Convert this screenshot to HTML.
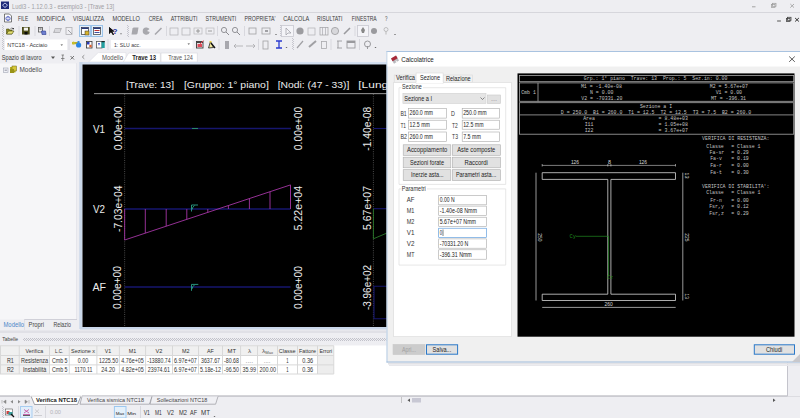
<!DOCTYPE html>
<html><head><meta charset="utf-8"><title>Ludi3</title>
<style>html,body{margin:0;padding:0;background:#eeeef2}body{width:800px;height:418px;overflow:hidden;font-family:"Liberation Sans",sans-serif}svg{display:block}</style>
</head><body>
<svg width="800" height="418" viewBox="0 0 800 418" font-family="Liberation Sans">
<rect x="0" y="0" width="800" height="418" fill="#eeeef2"/>
<rect x="1" y="1.5" width="8" height="7.5" fill="#1f2a78"/>
<path d="M2.5 5.2 L5 3 L7.5 5.2 L5 7.5 Z" fill="none" stroke="#c8d0f0" stroke-width="0.9"/>
<text x="12" y="8.5" font-size="6.4" fill="#a0a0a4" font-family="Liberation Sans" textLength="102.00" lengthAdjust="spacingAndGlyphs" xml:space="preserve">Ludi3 - 1.12.0.3 - esempio3 - [Trave 13]</text>
<line x1="752" y1="6.8" x2="755.5" y2="6.8" stroke="#9a9a9a" stroke-width="0.9"/>
<rect x="771.5" y="4.5" width="3.5" height="3" fill="#eeeef2" stroke="#9a9a9a" stroke-width="0.7"/>
<rect x="772.5" y="3.3" width="3.5" height="3" fill="none" stroke="#9a9a9a" stroke-width="0.7"/>
<path d="M790.3 4 L794 7.6 M794 4 L790.3 7.6" fill="none" stroke="#9a9a9a" stroke-width="0.8"/>
<line x1="0" y1="12.5" x2="800" y2="12.5" stroke="#d6d6dc" stroke-width="1"/>
<path d="M4.5 14 L9.5 14 L11.5 16 L11.5 22 L4.5 22Z" fill="#fff" stroke="#444" stroke-width="0.7"/>
<ellipse cx="8" cy="18.5" rx="2.6" ry="1.6" fill="none" stroke="#3a4ab8" stroke-width="0.6"/>
<ellipse cx="8" cy="18.5" rx="1.2" ry="2.4" fill="none" stroke="#3a4ab8" stroke-width="0.6"/>
<text x="18" y="20.8" font-size="6.5" fill="#3c3c3c" font-family="Liberation Sans" textLength="10.25" lengthAdjust="spacingAndGlyphs" xml:space="preserve">FILE</text>
<text x="36.75" y="20.8" font-size="6.5" fill="#3c3c3c" font-family="Liberation Sans" textLength="28.25" lengthAdjust="spacingAndGlyphs" xml:space="preserve">MODIFICA</text>
<text x="73" y="20.8" font-size="6.5" fill="#3c3c3c" font-family="Liberation Sans" textLength="31.25" lengthAdjust="spacingAndGlyphs" xml:space="preserve">VISUALIZZA</text>
<text x="112.5" y="20.8" font-size="6.5" fill="#3c3c3c" font-family="Liberation Sans" textLength="27.50" lengthAdjust="spacingAndGlyphs" xml:space="preserve">MODELLO</text>
<text x="148.75" y="20.8" font-size="6.5" fill="#3c3c3c" font-family="Liberation Sans" textLength="13.75" lengthAdjust="spacingAndGlyphs" xml:space="preserve">CREA</text>
<text x="170.75" y="20.8" font-size="6.5" fill="#3c3c3c" font-family="Liberation Sans" textLength="26.75" lengthAdjust="spacingAndGlyphs" xml:space="preserve">ATTRIBUTI</text>
<text x="205.5" y="20.8" font-size="6.5" fill="#3c3c3c" font-family="Liberation Sans" textLength="30.75" lengthAdjust="spacingAndGlyphs" xml:space="preserve">STRUMENTI</text>
<text x="244.5" y="20.8" font-size="6.5" fill="#3c3c3c" font-family="Liberation Sans" textLength="31.00" lengthAdjust="spacingAndGlyphs" xml:space="preserve">PROPRIETA'</text>
<text x="283.25" y="20.8" font-size="6.5" fill="#3c3c3c" font-family="Liberation Sans" textLength="26.00" lengthAdjust="spacingAndGlyphs" xml:space="preserve">CALCOLA</text>
<text x="317" y="20.8" font-size="6.5" fill="#3c3c3c" font-family="Liberation Sans" textLength="25.50" lengthAdjust="spacingAndGlyphs" xml:space="preserve">RISULTATI</text>
<text x="351.75" y="20.8" font-size="6.5" fill="#3c3c3c" font-family="Liberation Sans" textLength="25.00" lengthAdjust="spacingAndGlyphs" xml:space="preserve">FINESTRA</text>
<text x="385" y="20.8" font-size="6.5" fill="#3c3c3c" font-family="Liberation Sans" textLength="2.50" lengthAdjust="spacingAndGlyphs" xml:space="preserve">?</text>
<line x1="777.1" y1="21" x2="780.9" y2="21" stroke="#555" stroke-width="1"/>
<rect x="786.5" y="18.5" width="3.5" height="3" fill="#eeeef2" stroke="#444" stroke-width="0.8"/>
<rect x="787.5" y="17.3" width="3.5" height="3" fill="none" stroke="#444" stroke-width="0.8"/>
<path d="M795.1 18 L798.9 21.5 M798.9 18 L795.1 21.5" fill="none" stroke="#333" stroke-width="1"/>
<pattern id="g1" x="2" y="25" width="2" height="2" patternUnits="userSpaceOnUse"><rect x="0" y="0" width="1" height="1" fill="#c6c6ce"/><rect x="1" y="1" width="1" height="1" fill="#c6c6ce"/></pattern>
<rect x="2" y="25" width="2" height="12" fill="url(#g1)"/>
<path d="M6.5 29 L9 29 L9.5 30 L12 30 L12 34 L6.5 34Z" fill="#8a8a20" stroke="#4a4a10" stroke-width="0.6"/>
<path d="M6.5 34 L8.5 31 L14 31 L12 34Z" fill="#e4e070" stroke="#4a4a10" stroke-width="0.6"/>
<rect x="12.5" y="28" width="1.3" height="1.3" fill="#111"/>
<path d="M10.5 28.5 Q12 27.5 13 28.5" fill="none" stroke="#333" stroke-width="0.5"/>
<line x1="19.0" y1="26" x2="19.0" y2="36" stroke="#d8d8de" stroke-width="1"/>
<rect x="22" y="27" width="7.7" height="7.5" fill="#4a4a16"/>
<rect x="23.8" y="27.6" width="4.2" height="3" fill="#f4f4f0"/>
<rect x="24.5" y="32" width="3" height="2.5" fill="#0a0a0a"/>
<line x1="35.0" y1="26" x2="35.0" y2="36" stroke="#d8d8de" stroke-width="1"/>
<rect x="38.5" y="27.5" width="4" height="4.5" fill="#f0f0f0" stroke="#555" stroke-width="0.8"/>
<rect x="39.5" y="28.5" width="2" height="1" fill="#555"/>
<path d="M41.5 31 L45.5 31 L46 34.5 L42 34.5Z" fill="#7080d0" stroke="#2a3a90" stroke-width="0.6"/>
<line x1="49.5" y1="26" x2="49.5" y2="36" stroke="#d8d8de" stroke-width="1"/>
<path d="M53 33 L55 28 L62 28 L60 33Z" fill="#b8b8bc"/>
<rect x="55" y="29" width="5" height="3" fill="#d8d8dc"/>
<rect x="66" y="27.5" width="6" height="7" fill="none" stroke="#b0b0b4" stroke-width="0.8"/>
<path d="M68 30 L72 34" fill="none" stroke="#a0a0a4" stroke-width="1"/>
<rect x="79.5" y="25.5" width="11" height="11" fill="#e6f0fa" stroke="#9cc4ea" stroke-width="1"/>
<rect x="91.5" y="25.5" width="11" height="11" fill="#e6f0fa" stroke="#9cc4ea" stroke-width="1"/>
<rect x="81.5" y="27.5" width="7" height="7" fill="#fff" stroke="#333" stroke-width="0.7"/>
<rect x="81.5" y="27.5" width="7" height="1.5" fill="#2a3a7a"/>
<rect x="85" y="31" width="4" height="4" fill="#d9b42a" stroke="#333" stroke-width="0.5"/>
<rect x="93.5" y="27.5" width="7" height="7" fill="#fff" stroke="#333" stroke-width="0.7"/>
<rect x="93.5" y="27.5" width="7" height="1.5" fill="#2a3a7a"/>
<rect x="94.5" y="30" width="5" height="1" fill="#c03030"/>
<rect x="94.5" y="32" width="5" height="1" fill="#4050a0"/>
<path d="M109 27 L109 34 L111 32 L113 35 L114 34.5 L112 31.5 L114.5 31.5Z" fill="#111"/>
<text x="112.5" y="33.8" font-size="8" fill="#1a2a9a" font-family="Liberation Sans" font-weight="bold" textLength="5.00" lengthAdjust="spacingAndGlyphs" xml:space="preserve">?</text>
<path d="M120 33.5 L122 33.5 L121 34.5Z" fill="#444"/>
<pattern id="g2" x="127" y="25" width="2" height="2" patternUnits="userSpaceOnUse"><rect x="0" y="0" width="1" height="1" fill="#c6c6ce"/><rect x="1" y="1" width="1" height="1" fill="#c6c6ce"/></pattern>
<rect x="127" y="25" width="2" height="12" fill="url(#g2)"/>
<path d="M131.5 34.5 L132.5 28.5 Q133 27.5 134 27.5 L138.5 27.5 L137.5 33.5 Q137 34.5 136 34.5Z" fill="#a8a8ad"/>
<path d="M146 27.5 A3.6 3.6 0 1 0 149.8 32 L147 31 L149.5 29 A3.6 3.6 0 0 0 146 27.5Z" fill="#a8a8ad"/>
<line x1="155" y1="34.5" x2="161.5" y2="28" stroke="#a8a8ad" stroke-width="1.6"/>
<path d="M109 27 L109 34 L111 32 L113 35 L114 34.5 L112 31.5 L114.5 31.5Z" fill="#111"/>
<line x1="166.5" y1="26" x2="166.5" y2="36" stroke="#d8d8de" stroke-width="1"/>
<rect x="170" y="28" width="8" height="7" fill="none" stroke="#b0b0b4" stroke-width="0.7"/>
<rect x="182" y="28" width="8" height="7" fill="none" stroke="#b0b0b4" stroke-width="0.7"/>
<rect x="194" y="28" width="8" height="6" fill="none" stroke="#b8b8bc" stroke-width="0.7"/>
<path d="M196 31 L200 31 M198 29 L198 33" fill="none" stroke="#888" stroke-width="0.8"/>
<rect x="206" y="28" width="8" height="6" fill="none" stroke="#b8b8bc" stroke-width="0.7"/>
<path d="M208 31 L212 31" fill="none" stroke="#888" stroke-width="0.8"/>
<line x1="217.5" y1="26" x2="217.5" y2="36" stroke="#d8d8de" stroke-width="1"/>
<circle cx="224" cy="30" r="2.6" fill="none" stroke="#8a8a8e" stroke-width="0.9"/>
<line x1="226" y1="32" x2="229" y2="35" stroke="#8a8a8e" stroke-width="1"/>
<circle cx="235" cy="30" r="2.6" fill="none" stroke="#8a8a8e" stroke-width="0.9"/>
<line x1="237" y1="32" x2="240" y2="35" stroke="#8a8a8e" stroke-width="1"/>
<line x1="244.5" y1="26" x2="244.5" y2="36" stroke="#d8d8de" stroke-width="1"/>
<rect x="249" y="28" width="7" height="6" fill="none" stroke="#a0a0a4" stroke-width="0.8"/>
<rect x="262" y="28" width="8" height="6" fill="none" stroke="#a0a0a4" stroke-width="0.8"/>
<rect x="265" y="30" width="3" height="2" fill="#a0a0a4"/>
<path d="M275 34 L277 34 L276 35Z" fill="#444"/>
<pattern id="g3" x="280" y="25" width="2" height="2" patternUnits="userSpaceOnUse"><rect x="0" y="0" width="1" height="1" fill="#c6c6ce"/><rect x="1" y="1" width="1" height="1" fill="#c6c6ce"/></pattern>
<rect x="280" y="25" width="2" height="12" fill="url(#g3)"/>
<rect x="281.5" y="25.5" width="12" height="11" fill="#f4f4f8" stroke="#c8c8d0" stroke-width="0.8"/>
<path d="M286 28 L286 35 L288 33 L291 33Z" fill="none" stroke="#9a9aa0" stroke-width="0.7"/>
<circle cx="300" cy="31" r="3.6" fill="#9c9ca0"/>
<rect x="308" y="28" width="7" height="7" fill="none" stroke="#b0b0b4" stroke-width="0.7"/>
<rect x="320" y="27.5" width="8" height="7.5" fill="none" stroke="#a0a0a4" stroke-width="0.7"/>
<line x1="322.5" y1="27.5" x2="322.5" y2="35" stroke="#a0a0a4" stroke-width="0.6"/>
<line x1="325.5" y1="27.5" x2="325.5" y2="35" stroke="#a0a0a4" stroke-width="0.6"/>
<circle cx="335" cy="31" r="3.6" fill="#d8d8dc" stroke="#909094" stroke-width="0.7"/>
<line x1="344" y1="34" x2="350" y2="28" stroke="#9a9a9e" stroke-width="1.6"/>
<line x1="355.0" y1="26" x2="355.0" y2="36" stroke="#d8d8de" stroke-width="1"/>
<rect x="357.5" y="25.5" width="11" height="11" fill="#f4f4f8" stroke="#c8c8d0" stroke-width="0.8"/>
<path d="M363 27 L365 30 L364 33 L362 33 L361 30Z" fill="#888"/>
<circle cx="374" cy="31" r="3" fill="#9a9a9e"/>
<circle cx="386" cy="29.5" r="2" fill="none" stroke="#aaa" stroke-width="0.7"/>
<line x1="386" y1="31.5" x2="386" y2="34.5" stroke="#aaa" stroke-width="0.8"/>
<path d="M394 34 L396 34 L395 35Z" fill="#444"/>
<pattern id="g4" x="2" y="38" width="2" height="2" patternUnits="userSpaceOnUse"><rect x="0" y="0" width="1" height="1" fill="#c6c6ce"/><rect x="1" y="1" width="1" height="1" fill="#c6c6ce"/></pattern>
<rect x="2" y="38" width="2" height="12" fill="url(#g4)"/>
<rect x="5" y="39.5" width="62" height="10.5" fill="#ffffff"/>
<text x="7.2" y="47.1" font-size="5.6" fill="#3a3a3a" font-family="Liberation Sans" textLength="40.10" lengthAdjust="spacingAndGlyphs" xml:space="preserve">NTC18 - Acciaio</text>
<path d="M60.5 44.5 L63 44.5 L61.75 45.8Z" fill="#444"/>
<line x1="69.0" y1="39" x2="69.0" y2="50" stroke="#d8d8de" stroke-width="1"/>
<rect x="72" y="42" width="6" height="2.2" fill="#b8b028"/>
<circle cx="73.5" cy="43" r="1.5" fill="#c8c030"/>
<circle cx="78.6" cy="45" r="2.6" fill="#2a86e8"/>
<rect x="77.5" y="41" width="2" height="2.5" fill="#3a90e0"/>
<rect x="86.5" y="41.5" width="5.5" height="6.5" fill="#fff" stroke="#333" stroke-width="0.8"/>
<rect x="87" y="42" width="2.5" height="2.5" fill="#2a3ab8"/>
<rect x="89.3" y="44.8" width="2.3" height="2.5" fill="#e06030"/>
<rect x="96.5" y="41.5" width="5.5" height="6.5" fill="#fff" stroke="#555" stroke-width="0.8"/>
<path d="M98 43 L100 43 L99 46Z" fill="#3a50d0"/>
<rect x="101.5" y="41" width="3.2" height="7" fill="#22a0a0"/>
<rect x="101.5" y="41" width="3.2" height="1.2" fill="#222"/>
<line x1="108.0" y1="39" x2="108.0" y2="50" stroke="#d8d8de" stroke-width="1"/>
<rect x="111" y="40" width="81.5" height="8.5" fill="#ffffff"/>
<text x="114" y="46.8" font-size="5.6" fill="#3a3a3a" font-family="Liberation Sans" textLength="26.60" lengthAdjust="spacingAndGlyphs" xml:space="preserve">1: SLU acc.</text>
<path d="M187.5 43.5 L190 43.5 L188.75 44.8Z" fill="#444"/>
<rect x="196.5" y="41.5" width="6.5" height="6.5" fill="#f4f4f4" stroke="#3a3a3a" stroke-width="0.9"/>
<rect x="196.5" y="41.5" width="6.5" height="1.6" fill="#444"/>
<rect x="197.5" y="44" width="4.5" height="3" fill="#e04858"/>
<line x1="200" y1="44" x2="203.5" y2="40.5" stroke="#f04050" stroke-width="0.9"/>
<path d="M208.5 48 L210.5 41.5 L213.5 47.5Z" fill="#f0e8a0" stroke="#222" stroke-width="0.8"/>
<line x1="211" y1="43" x2="215" y2="48" stroke="#111" stroke-width="1.3"/>
<rect x="209.5" y="41" width="2" height="1.5" fill="#e8d040"/>
<line x1="219.0" y1="39" x2="219.0" y2="50" stroke="#d8d8de" stroke-width="1"/>
<rect x="225" y="41" width="4" height="8" fill="#a8a8ae"/>
<path d="M234 46 L243 46 M236 44 L234 46 L236 48" fill="none" stroke="#a8a8ac" stroke-width="0.8"/>
<path d="M246 46 L255 46 M253 44 L255 46 L253 48" fill="none" stroke="#a8a8ac" stroke-width="0.8"/>
<line x1="258.5" y1="39" x2="258.5" y2="50" stroke="#d8d8de" stroke-width="1"/>
<rect x="263" y="41" width="5" height="8" fill="none" stroke="#a0a0a4" stroke-width="0.8"/>
<path d="M276 41 L282 41 M279 41 L279 48 M276 48 L282 48" fill="none" stroke="#2a3ad0" stroke-width="1.3"/>
<path d="M285.5 47 L287.5 47 L286.5 48Z" fill="#444"/>
<pattern id="g5" x="292" y="38" width="2" height="2" patternUnits="userSpaceOnUse"><rect x="0" y="0" width="1" height="1" fill="#c6c6ce"/><rect x="1" y="1" width="1" height="1" fill="#c6c6ce"/></pattern>
<rect x="292" y="38" width="2" height="12" fill="url(#g5)"/>
<line x1="297" y1="48" x2="303" y2="41" stroke="#a0a0a4" stroke-width="1.2"/>
<line x1="309" y1="47" x2="316" y2="41" stroke="#a0a0a4" stroke-width="2"/>
<rect x="321.5" y="41.5" width="5" height="7" fill="none" stroke="#a8a8ac" stroke-width="0.8"/>
<line x1="331.0" y1="39" x2="331.0" y2="50" stroke="#d8d8de" stroke-width="1"/>
<path d="M337 41 L342 41 M338 41 L338 48 M337 48 L342 48" fill="none" stroke="#9a9a9e" stroke-width="0.9"/>
<rect x="347" y="41" width="8" height="7" fill="none" stroke="#9a9a9e" stroke-width="0.9"/>
<rect x="347" y="41" width="8" height="2" fill="#9a9a9e"/>
<line x1="359.5" y1="39" x2="359.5" y2="50" stroke="#d8d8de" stroke-width="1"/>
<circle cx="367.5" cy="44" r="3" fill="none" stroke="#9a9a9e" stroke-width="1"/>
<line x1="367.5" y1="46" x2="367.5" y2="49" stroke="#9a9a9e" stroke-width="1"/>
<path d="M374.5 47 L376.5 47 L375.5 48Z" fill="#444"/>
<text x="1.8" y="59.8" font-size="6.3" fill="#3a3a3a" font-family="Liberation Sans" textLength="39.80" lengthAdjust="spacingAndGlyphs" xml:space="preserve">Spazio di lavoro</text>
<path d="M51 56.5 L55 56.5 L53 59Z" fill="#555"/>
<path d="M61.5 55 L64 55 M62.75 55 L62.75 58.5 M61 58.5 L64.5 58.5 M62.75 58.5 L62.75 61" fill="none" stroke="#666" stroke-width="0.7"/>
<path d="M70.5 56 L74 59.5 M74 56 L70.5 59.5" fill="none" stroke="#555" stroke-width="0.8"/>
<rect x="0" y="63.5" width="76.5" height="256" fill="#f6f6f8"/>
<line x1="76.5" y1="63" x2="76.5" y2="330" stroke="#e6e6ec" stroke-width="1"/>
<rect x="3.5" y="68" width="4.5" height="4.3" fill="#eef0f6" stroke="#a0a6b4" stroke-width="0.6"/>
<line x1="4.6" y1="70.2" x2="6.9" y2="70.2" stroke="#556" stroke-width="0.6"/>
<rect x="10" y="67" width="5.5" height="5.5" fill="#b8b020"/>
<rect x="12" y="66" width="4.5" height="5" fill="#d6c83a" stroke="#6a6010" stroke-width="0.5"/>
<rect x="10" y="69" width="4" height="4" fill="#9a9418"/>
<text x="19.5" y="72" font-size="6.4" fill="#4a4a4a" font-family="Liberation Sans" textLength="22.50" lengthAdjust="spacingAndGlyphs" xml:space="preserve">Modello</text>
<rect x="24" y="319.5" width="53" height="10.5" fill="#eeeef2"/>
<line x1="24" y1="319.5" x2="77" y2="319.5" stroke="#d0d0d8" stroke-width="1"/>
<line x1="24.5" y1="319.5" x2="24.5" y2="330" stroke="#e0e0e6" stroke-width="1"/>
<text x="3.5" y="327" font-size="6.3" fill="#4a86c8" font-family="Liberation Sans" textLength="20.50" lengthAdjust="spacingAndGlyphs" xml:space="preserve">Modello</text>
<text x="28.5" y="327" font-size="6.3" fill="#444" font-family="Liberation Sans" textLength="15.50" lengthAdjust="spacingAndGlyphs" xml:space="preserve">Propri</text>
<text x="53.5" y="327" font-size="6.3" fill="#444" font-family="Liberation Sans" textLength="17.50" lengthAdjust="spacingAndGlyphs" xml:space="preserve">Relazio</text>
<path d="M84.3 55.2 L82.3 57 L84.3 58.8" fill="none" stroke="#777" stroke-width="0.8"/>
<path d="M88.5 62 L98.2 52.6 L126 52.6 L126 62Z" fill="#ffffff" stroke="#dcdce2" stroke-width="0.6"/>
<path d="M123.3 62 L128.6 53 L160.3 53 L160.3 62Z" fill="#ffffff" stroke="#d6d6dc" stroke-width="0.6"/>
<rect x="161" y="53" width="36.2" height="9" fill="#ffffff" stroke="#d6d6dc" stroke-width="0.6"/>
<text x="102" y="59.85" font-size="6.6" fill="#555" font-family="Liberation Sans" textLength="21.00" lengthAdjust="spacingAndGlyphs" xml:space="preserve">Modello</text>
<text x="132.3" y="59.7" font-size="6.4" fill="#222" font-family="Liberation Sans" font-weight="bold" textLength="23.70" lengthAdjust="spacingAndGlyphs" xml:space="preserve">Trave 13</text>
<text x="168.2" y="59.7" font-size="6.4" fill="#555" font-family="Liberation Sans" textLength="24.70" lengthAdjust="spacingAndGlyphs" xml:space="preserve">Trave 124</text>
<rect x="80" y="62" width="310" height="3" fill="#d3dff0"/>
<rect x="79.3" y="62" width="3.2" height="267" fill="#cad8ea"/>
<rect x="80" y="327" width="310" height="2.5" fill="#c9d7ea"/>
<rect x="82.5" y="64.5" width="305" height="262.5" fill="#000"/>
<g>
<text x="126" y="88.25" font-size="9.8" fill="#ececec" font-family="Liberation Sans" textLength="48.00" lengthAdjust="spacingAndGlyphs" xml:space="preserve">[Trave: 13]</text>
<text x="183.9" y="88.25" font-size="9.8" fill="#ececec" font-family="Liberation Sans" textLength="84.90" lengthAdjust="spacingAndGlyphs" xml:space="preserve">[Gruppo: 1° piano]</text>
<text x="277.7" y="88.25" font-size="9.8" fill="#ececec" font-family="Liberation Sans" textLength="71.70" lengthAdjust="spacingAndGlyphs" xml:space="preserve">[Nodi: (47 - 33)]</text>
<text x="358.3" y="88.25" font-size="9.8" fill="#ececec" font-family="Liberation Sans" textLength="61.70" lengthAdjust="spacingAndGlyphs" xml:space="preserve">[Lunghezza</text>
<rect x="387" y="66" width="14" height="30" fill="#000"/>
<line x1="94" y1="93.65" x2="387" y2="93.65" stroke="#9a9a9a" stroke-width="1"/>
<line x1="124.65" y1="94" x2="124.65" y2="327" stroke="#7a7a7a" stroke-width="0.6" stroke-dasharray="1,1.2"/>
<line x1="373.4" y1="94" x2="373.4" y2="327" stroke="#7a7a7a" stroke-width="0.6" stroke-dasharray="1,1.2"/>
<text x="93" y="132.7" font-size="10" fill="#ececec" font-family="Liberation Sans" textLength="12.00" lengthAdjust="spacingAndGlyphs" xml:space="preserve">V1</text>
<text x="93" y="212.7" font-size="10" fill="#ececec" font-family="Liberation Sans" textLength="12.00" lengthAdjust="spacingAndGlyphs" xml:space="preserve">V2</text>
<text x="92.4" y="290.7" font-size="10" fill="#ececec" font-family="Liberation Sans" textLength="13.60" lengthAdjust="spacingAndGlyphs" xml:space="preserve">AF</text>
<line x1="124.65" y1="128.5" x2="290.9" y2="128.5" stroke="#16166e" stroke-width="1.3"/>
<line x1="373.4" y1="128.5" x2="387" y2="128.5" stroke="#16166e" stroke-width="1.1"/>
<line x1="192" y1="128.5" x2="198" y2="128.5" stroke="#2a8a6a" stroke-width="1"/>
<line x1="124.65" y1="209" x2="290.5" y2="209" stroke="#16166e" stroke-width="1.3"/>
<line x1="124.65" y1="240" x2="290.5" y2="184.9" stroke="#a535a5" stroke-width="0.9"/>
<line x1="124.65" y1="209" x2="124.65" y2="240" stroke="#a535a5" stroke-width="0.9"/>
<line x1="145.3" y1="209" x2="145.3" y2="233.1442" stroke="#a535a5" stroke-width="0.9"/>
<line x1="166.2" y1="209" x2="166.2" y2="226.2054" stroke="#a535a5" stroke-width="0.9"/>
<line x1="186.8" y1="209" x2="186.8" y2="219.3662" stroke="#a535a5" stroke-width="0.9"/>
<line x1="207.8" y1="209" x2="207.8" y2="212.3942" stroke="#a535a5" stroke-width="0.9"/>
<line x1="228.4" y1="209" x2="228.4" y2="205.555" stroke="#a535a5" stroke-width="0.9"/>
<line x1="249.4" y1="209" x2="249.4" y2="198.583" stroke="#a535a5" stroke-width="0.9"/>
<line x1="270" y1="209" x2="270" y2="191.7438" stroke="#a535a5" stroke-width="0.9"/>
<line x1="290.5" y1="209" x2="290.5" y2="184.93779999999998" stroke="#a535a5" stroke-width="0.9"/>
<path d="M191.5 211.5 L191.5 205 L198 205 M194.5 205.5 Q192.5 207 192 209.5" fill="none" stroke="#2aa088" stroke-width="0.9"/>
<line x1="124.65" y1="287" x2="290.5" y2="287" stroke="#16166e" stroke-width="1.3"/>
<path d="M191.5 290.8 L191.5 284.4 L198.3 284.4 M194.5 284.9 Q192.5 286.4 192 288.9" fill="none" stroke="#2aa088" stroke-width="0.9"/>
<line x1="373.4" y1="208.7" x2="387" y2="208.7" stroke="#16166e" stroke-width="1.1"/>
<line x1="373.4" y1="208.7" x2="373.4" y2="238.8" stroke="#2a7a2a" stroke-width="0.9"/>
<line x1="373.4" y1="238.8" x2="387" y2="233" stroke="#2a7a2a" stroke-width="0.9"/>
<path d="M373.4 286.3 L387 286.3 M374 286.3 L374 318.8 L387 318.8" fill="none" stroke="#16166e" stroke-width="1.1"/>
<text transform="translate(121.6,150.2) rotate(-90)" x="0" y="0" font-size="10" fill="#ececec" font-family="Liberation Sans" textLength="43.70" lengthAdjust="spacingAndGlyphs">0.00e+00</text>
<text transform="translate(121.6,232) rotate(-90)" x="0" y="0" font-size="10" fill="#ececec" font-family="Liberation Sans" textLength="46.50" lengthAdjust="spacingAndGlyphs">-7.03e+04</text>
<text transform="translate(121.3,309) rotate(-90)" x="0" y="0" font-size="10" fill="#ececec" font-family="Liberation Sans" textLength="43.00" lengthAdjust="spacingAndGlyphs">0.00e+00</text>
<text transform="translate(301.8,150.2) rotate(-90)" x="0" y="0" font-size="10" fill="#ececec" font-family="Liberation Sans" textLength="43.50" lengthAdjust="spacingAndGlyphs">0.00e+00</text>
<text transform="translate(301.8,230.4) rotate(-90)" x="0" y="0" font-size="10" fill="#ececec" font-family="Liberation Sans" textLength="44.60" lengthAdjust="spacingAndGlyphs">5.22e+04</text>
<text transform="translate(301.8,309) rotate(-90)" x="0" y="0" font-size="10" fill="#ececec" font-family="Liberation Sans" textLength="43.00" lengthAdjust="spacingAndGlyphs">0.00e+00</text>
<text transform="translate(371.4,150.7) rotate(-90)" x="0" y="0" font-size="10" fill="#ececec" font-family="Liberation Sans" textLength="44.00" lengthAdjust="spacingAndGlyphs">-1.40e-08</text>
<text transform="translate(371.4,230) rotate(-90)" x="0" y="0" font-size="10" fill="#ececec" font-family="Liberation Sans" textLength="44.00" lengthAdjust="spacingAndGlyphs">5.67e+07</text>
<text transform="translate(371.4,310) rotate(-90)" x="0" y="0" font-size="10" fill="#ececec" font-family="Liberation Sans" textLength="45.00" lengthAdjust="spacingAndGlyphs">-3.96e+02</text>
</g>
<rect x="0" y="330.5" width="800" height="2.5" fill="#e0e0e6"/>
<text x="2.2" y="341.4" font-size="6" fill="#444" font-family="Liberation Sans" textLength="15.90" lengthAdjust="spacingAndGlyphs" xml:space="preserve">Tabelle</text>
<pattern id="zz" x="0" y="338" width="2" height="3" patternUnits="userSpaceOnUse"><rect x="0" y="0" width="1" height="1" fill="#c2c2ca"/><rect x="1" y="1" width="1" height="1" fill="#c2c2ca"/><rect x="0" y="2" width="1" height="1" fill="#c2c2ca"/></pattern>
<rect x="23" y="338" width="767" height="3" fill="url(#zz)"/>
<rect x="0" y="345.5" width="787.5" height="50.5" fill="#ffffff"/>
<rect x="0" y="345.75" width="333.75" height="9.75" fill="#f0f0f0"/>
<rect x="0" y="355.5" width="19.25" height="18.5" fill="#f0f0f0"/>
<rect x="19.25" y="355.5" width="30.25" height="18.5" fill="#f2f2f2"/>
<rect x="317.5" y="355.5" width="16.25" height="18.5" fill="#ededed"/>
<line x1="0.5" y1="345.75" x2="0.5" y2="374" stroke="#d8d8d8" stroke-width="1"/>
<line x1="19.25" y1="345.75" x2="19.25" y2="374" stroke="#d8d8d8" stroke-width="1"/>
<line x1="49.5" y1="345.75" x2="49.5" y2="374" stroke="#d8d8d8" stroke-width="1"/>
<line x1="69.25" y1="345.75" x2="69.25" y2="374" stroke="#d8d8d8" stroke-width="1"/>
<line x1="96.9" y1="345.75" x2="96.9" y2="374" stroke="#d8d8d8" stroke-width="1"/>
<line x1="119.4" y1="345.75" x2="119.4" y2="374" stroke="#d8d8d8" stroke-width="1"/>
<line x1="145.6" y1="345.75" x2="145.6" y2="374" stroke="#d8d8d8" stroke-width="1"/>
<line x1="172.5" y1="345.75" x2="172.5" y2="374" stroke="#d8d8d8" stroke-width="1"/>
<line x1="198.5" y1="345.75" x2="198.5" y2="374" stroke="#d8d8d8" stroke-width="1"/>
<line x1="222.5" y1="345.75" x2="222.5" y2="374" stroke="#d8d8d8" stroke-width="1"/>
<line x1="240.6" y1="345.75" x2="240.6" y2="374" stroke="#d8d8d8" stroke-width="1"/>
<line x1="257.5" y1="345.75" x2="257.5" y2="374" stroke="#d8d8d8" stroke-width="1"/>
<line x1="277.5" y1="345.75" x2="277.5" y2="374" stroke="#d8d8d8" stroke-width="1"/>
<line x1="297.5" y1="345.75" x2="297.5" y2="374" stroke="#d8d8d8" stroke-width="1"/>
<line x1="317.5" y1="345.75" x2="317.5" y2="374" stroke="#d8d8d8" stroke-width="1"/>
<line x1="333.75" y1="345.75" x2="333.75" y2="374" stroke="#d8d8d8" stroke-width="1"/>
<line x1="0" y1="345.75" x2="333.75" y2="345.75" stroke="#d8d8d8" stroke-width="1"/>
<line x1="0" y1="355.5" x2="333.75" y2="355.5" stroke="#d8d8d8" stroke-width="1"/>
<line x1="0" y1="364.9" x2="333.75" y2="364.9" stroke="#d8d8d8" stroke-width="1"/>
<line x1="0" y1="374" x2="333.75" y2="374" stroke="#d8d8d8" stroke-width="1"/>
<text x="25.6" y="353.2" font-size="6.1" fill="#333" font-family="Liberation Sans" textLength="17.50" lengthAdjust="spacingAndGlyphs" xml:space="preserve">Verifica</text>
<text x="55" y="353.2" font-size="6.1" fill="#333" font-family="Liberation Sans" textLength="8.10" lengthAdjust="spacingAndGlyphs" xml:space="preserve">L.C.</text>
<text x="71" y="353.2" font-size="6.1" fill="#333" font-family="Liberation Sans" textLength="24.00" lengthAdjust="spacingAndGlyphs" xml:space="preserve">Sezione x</text>
<text x="104.75" y="353.2" font-size="6.1" fill="#333" font-family="Liberation Sans" textLength="6.50" lengthAdjust="spacingAndGlyphs" xml:space="preserve">V1</text>
<text x="128.75" y="353.2" font-size="6.1" fill="#333" font-family="Liberation Sans" textLength="7.50" lengthAdjust="spacingAndGlyphs" xml:space="preserve">M1</text>
<text x="155.6" y="353.2" font-size="6.1" fill="#333" font-family="Liberation Sans" textLength="6.90" lengthAdjust="spacingAndGlyphs" xml:space="preserve">V2</text>
<text x="181.9" y="353.2" font-size="6.1" fill="#333" font-family="Liberation Sans" textLength="7.50" lengthAdjust="spacingAndGlyphs" xml:space="preserve">M2</text>
<text x="206.9" y="353.2" font-size="6.1" fill="#333" font-family="Liberation Sans" textLength="6.85" lengthAdjust="spacingAndGlyphs" xml:space="preserve">AF</text>
<text x="227.5" y="353.2" font-size="6.1" fill="#333" font-family="Liberation Sans" textLength="8.50" lengthAdjust="spacingAndGlyphs" xml:space="preserve">MT</text>
<text x="278.75" y="353.2" font-size="6.1" fill="#333" font-family="Liberation Sans" textLength="16.85" lengthAdjust="spacingAndGlyphs" xml:space="preserve">Classe</text>
<text x="299" y="353.2" font-size="6.1" fill="#333" font-family="Liberation Sans" textLength="17.00" lengthAdjust="spacingAndGlyphs" xml:space="preserve">Fattore</text>
<text x="319.4" y="353.2" font-size="6.1" fill="#333" font-family="Liberation Sans" textLength="12.85" lengthAdjust="spacingAndGlyphs" xml:space="preserve">Errori</text>
<text x="248.1" y="353.3" font-size="5.8" fill="#555" font-family="Liberation Sans" textLength="3.20" lengthAdjust="spacingAndGlyphs" xml:space="preserve">λ</text>
<text x="261.9" y="352.6" font-size="5.8" fill="#555" font-family="Liberation Sans" textLength="3.30" lengthAdjust="spacingAndGlyphs" xml:space="preserve">λ</text>
<text x="265.2" y="354.2" font-size="4.2" fill="#555" font-family="Liberation Sans" textLength="7.90" lengthAdjust="spacingAndGlyphs" xml:space="preserve">Max</text>
<text x="6.9" y="362.7" font-size="6.3" fill="#333" font-family="Liberation Sans" textLength="6.85" lengthAdjust="spacingAndGlyphs" xml:space="preserve">R1</text>
<text x="21" y="362.7" font-size="6.3" fill="#333" font-family="Liberation Sans" textLength="27.10" lengthAdjust="spacingAndGlyphs" xml:space="preserve">Resistenza</text>
<text x="51.9" y="362.7" font-size="6.3" fill="#333" font-family="Liberation Sans" textLength="15.60" lengthAdjust="spacingAndGlyphs" xml:space="preserve">Cmb 5</text>
<text x="77.75" y="362.7" font-size="6.3" fill="#333" font-family="Liberation Sans" textLength="10.35" lengthAdjust="spacingAndGlyphs" xml:space="preserve">0.00</text>
<text x="99" y="362.7" font-size="6.3" fill="#333" font-family="Liberation Sans" textLength="19.10" lengthAdjust="spacingAndGlyphs" xml:space="preserve">1225.50</text>
<text x="121.25" y="362.7" font-size="6.3" fill="#333" font-family="Liberation Sans" textLength="22.50" lengthAdjust="spacingAndGlyphs" xml:space="preserve">4.76e+05</text>
<text x="147.25" y="362.7" font-size="6.3" fill="#333" font-family="Liberation Sans" textLength="23.35" lengthAdjust="spacingAndGlyphs" xml:space="preserve">-13880.74</text>
<text x="174" y="362.7" font-size="6.3" fill="#333" font-family="Liberation Sans" textLength="22.90" lengthAdjust="spacingAndGlyphs" xml:space="preserve">6.97e+07</text>
<text x="201" y="362.7" font-size="6.3" fill="#333" font-family="Liberation Sans" textLength="19.00" lengthAdjust="spacingAndGlyphs" xml:space="preserve">3637.67</text>
<text x="224" y="362.7" font-size="6.3" fill="#333" font-family="Liberation Sans" textLength="15.00" lengthAdjust="spacingAndGlyphs" xml:space="preserve">-80.68</text>
<text x="286.25" y="362.7" font-size="6.3" fill="#333" font-family="Liberation Sans" textLength="2.35" lengthAdjust="spacingAndGlyphs" xml:space="preserve">1</text>
<text x="302.25" y="362.7" font-size="6.3" fill="#333" font-family="Liberation Sans" textLength="10.85" lengthAdjust="spacingAndGlyphs" xml:space="preserve">0.36</text>
<text x="245.6" y="362.7" font-size="5.8" fill="#666" font-family="Liberation Sans" textLength="7.50" lengthAdjust="spacingAndGlyphs" xml:space="preserve">....</text>
<text x="263.75" y="362.7" font-size="5.8" fill="#666" font-family="Liberation Sans" textLength="6.75" lengthAdjust="spacingAndGlyphs" xml:space="preserve">....</text>
<text x="6.9" y="371.8" font-size="6.3" fill="#333" font-family="Liberation Sans" textLength="6.85" lengthAdjust="spacingAndGlyphs" xml:space="preserve">R2</text>
<text x="23.1" y="371.8" font-size="6.3" fill="#333" font-family="Liberation Sans" textLength="23.15" lengthAdjust="spacingAndGlyphs" xml:space="preserve">Instabilità</text>
<text x="51.9" y="371.8" font-size="6.3" fill="#333" font-family="Liberation Sans" textLength="15.60" lengthAdjust="spacingAndGlyphs" xml:space="preserve">Cmb 5</text>
<text x="74.4" y="371.8" font-size="6.3" fill="#333" font-family="Liberation Sans" textLength="18.10" lengthAdjust="spacingAndGlyphs" xml:space="preserve">1170.11</text>
<text x="101.25" y="371.8" font-size="6.3" fill="#333" font-family="Liberation Sans" textLength="13.75" lengthAdjust="spacingAndGlyphs" xml:space="preserve">24.20</text>
<text x="121.25" y="371.8" font-size="6.3" fill="#333" font-family="Liberation Sans" textLength="22.50" lengthAdjust="spacingAndGlyphs" xml:space="preserve">4.82e+05</text>
<text x="147.75" y="371.8" font-size="6.3" fill="#333" font-family="Liberation Sans" textLength="22.25" lengthAdjust="spacingAndGlyphs" xml:space="preserve">23974.61</text>
<text x="174" y="371.8" font-size="6.3" fill="#333" font-family="Liberation Sans" textLength="22.90" lengthAdjust="spacingAndGlyphs" xml:space="preserve">6.97e+07</text>
<text x="200" y="371.8" font-size="6.3" fill="#333" font-family="Liberation Sans" textLength="21.00" lengthAdjust="spacingAndGlyphs" xml:space="preserve">5.18e-12</text>
<text x="224" y="371.8" font-size="6.3" fill="#333" font-family="Liberation Sans" textLength="15.00" lengthAdjust="spacingAndGlyphs" xml:space="preserve">-96.50</text>
<text x="242.5" y="371.8" font-size="6.3" fill="#333" font-family="Liberation Sans" textLength="13.50" lengthAdjust="spacingAndGlyphs" xml:space="preserve">35.99</text>
<text x="259.4" y="371.8" font-size="6.3" fill="#333" font-family="Liberation Sans" textLength="16.60" lengthAdjust="spacingAndGlyphs" xml:space="preserve">200.00</text>
<text x="286.25" y="371.8" font-size="6.3" fill="#333" font-family="Liberation Sans" textLength="2.35" lengthAdjust="spacingAndGlyphs" xml:space="preserve">1</text>
<text x="302.25" y="371.8" font-size="6.3" fill="#333" font-family="Liberation Sans" textLength="10.85" lengthAdjust="spacingAndGlyphs" xml:space="preserve">0.36</text>
<line x1="0" y1="396" x2="800" y2="396" stroke="#a8a8b0" stroke-width="1"/>
<rect x="787.5" y="345.5" width="12.5" height="51" fill="#eeeef2"/>
<line x1="787.5" y1="345.5" x2="787.5" y2="396" stroke="#c4c4cc" stroke-width="1"/>
<path d="M2 400 L2 403.5 M6 400 L3.5 401.75 L6 403.5Z" fill="#888" stroke="#888" stroke-width="0.5"/>
<path d="M13 400 L10.5 401.75 L13 403.5Z" fill="#888"/>
<path d="M18 400 L20.5 401.75 L18 403.5Z" fill="#888"/>
<path d="M29 400 L29 403.5 M25 400 L27.5 401.75 L25 403.5Z" fill="#888" stroke="#888" stroke-width="0.5"/>
<path d="M152 396.5 L149.5 404.2 L80 404.2 L82 396.5" fill="#f0f0f4" stroke="#8a8a90" stroke-width="0.6"/>
<path d="M218 396.5 L215.6 404.2 L150 404.2 L152 396.5" fill="#f0f0f4" stroke="#8a8a90" stroke-width="0.6"/>
<path d="M31 396 L34.5 404.5 L77.5 404.5 L81 396Z" fill="#ffffff" stroke="#6a6a70" stroke-width="0.6"/>
<rect x="30" y="395.2" width="52" height="1.3" fill="#ffffff"/>
<text x="36" y="402.2" font-size="5.5" fill="#222" font-family="Liberation Sans" font-weight="bold" textLength="41.00" lengthAdjust="spacingAndGlyphs" xml:space="preserve">Verifica NTC18</text>
<text x="87" y="402.2" font-size="5.5" fill="#444" font-family="Liberation Sans" textLength="57.00" lengthAdjust="spacingAndGlyphs" xml:space="preserve">Verifica sismica NTC18</text>
<text x="156.8" y="402.2" font-size="5.5" fill="#444" font-family="Liberation Sans" textLength="50.40" lengthAdjust="spacingAndGlyphs" xml:space="preserve">Sollecitazioni NTC18</text>
<rect x="401" y="397.5" width="1" height="1" fill="#999"/>
<rect x="401" y="399.5" width="1" height="1" fill="#999"/>
<rect x="401" y="401.5" width="1" height="1" fill="#999"/>
<path d="M410 398.5 L407.5 400.25 L410 402Z" fill="#555"/>
<rect x="412" y="398" width="9" height="4.5" fill="#c8c8d4"/>
<path d="M773 398.5 L775.5 400.25 L773 402Z" fill="#555"/>
<pattern id="g6" x="2" y="406" width="2" height="2" patternUnits="userSpaceOnUse"><rect x="0" y="0" width="1" height="1" fill="#c6c6ce"/><rect x="1" y="1" width="1" height="1" fill="#c6c6ce"/></pattern>
<rect x="2" y="406" width="2" height="12" fill="url(#g6)"/>
<rect x="5.5" y="409" width="7" height="6" fill="#fff" stroke="#555" stroke-width="0.6"/>
<rect x="6.5" y="411" width="3" height="3" fill="#d04040"/>
<rect x="8.5" y="412" width="4" height="3" fill="#3aa0a0"/>
<line x1="11" y1="414" x2="14" y2="417" stroke="#111" stroke-width="1.2"/>
<line x1="18.5" y1="406" x2="18.5" y2="418" stroke="#d8d8de" stroke-width="1"/>
<rect x="20.5" y="406.5" width="11.5" height="11.5" fill="#e2eefa" stroke="#a8cdf0" stroke-width="1"/>
<path d="M23 414.5 L30 414.5 M24 409.5 L29 413 M29 409.5 L24 413" fill="none" stroke="#c03090" stroke-width="0.7"/>
<line x1="23" y1="415.5" x2="30" y2="415.5" stroke="#222" stroke-width="0.7"/>
<path d="M35 409.5 L39 413 M39 409.5 L35 413 M34 415.5 L42 415.5" fill="none" stroke="#b8b8bc" stroke-width="0.6"/>
<line x1="45.5" y1="406" x2="45.5" y2="418" stroke="#d8d8de" stroke-width="1"/>
<text x="50" y="414.3" font-size="5.8" fill="#b4b4b8" font-family="Liberation Sans" textLength="11.00" lengthAdjust="spacingAndGlyphs" xml:space="preserve">0.00</text>
<rect x="114.4" y="406.5" width="11.6" height="11.5" fill="#e4f0fa" stroke="#9cc8f0" stroke-width="1"/>
<text x="115.8" y="414.5" font-size="4.4" fill="#222" font-family="Liberation Sans" textLength="8.60" lengthAdjust="spacingAndGlyphs" xml:space="preserve">Max</text>
<text x="127.2" y="414.5" font-size="4.4" fill="#222" font-family="Liberation Sans" textLength="8.90" lengthAdjust="spacingAndGlyphs" xml:space="preserve">Min</text>
<line x1="140.5" y1="406" x2="140.5" y2="418" stroke="#d8d8de" stroke-width="1"/>
<text x="143.7" y="414.7" font-size="6.9" fill="#333" font-family="Liberation Sans" textLength="6.20" lengthAdjust="spacingAndGlyphs" xml:space="preserve">V1</text>
<text x="155" y="414.7" font-size="6.9" fill="#333" font-family="Liberation Sans" textLength="6.80" lengthAdjust="spacingAndGlyphs" xml:space="preserve">M1</text>
<text x="167" y="414.7" font-size="6.9" fill="#333" font-family="Liberation Sans" textLength="7.00" lengthAdjust="spacingAndGlyphs" xml:space="preserve">V2</text>
<text x="179" y="414.7" font-size="6.9" fill="#333" font-family="Liberation Sans" textLength="8.00" lengthAdjust="spacingAndGlyphs" xml:space="preserve">M2</text>
<text x="190" y="414.7" font-size="6.9" fill="#333" font-family="Liberation Sans" textLength="7.00" lengthAdjust="spacingAndGlyphs" xml:space="preserve">AF</text>
<text x="201" y="414.7" font-size="6.9" fill="#333" font-family="Liberation Sans" textLength="9.00" lengthAdjust="spacingAndGlyphs" xml:space="preserve">MT</text>
<path d="M213.5 416 L215.5 416 L214.5 417Z" fill="#444"/>
<rect x="388" y="362.5" width="412" height="2" fill="#e2e2e6"/>
<rect x="389" y="364.5" width="411" height="1.5" fill="#e8e8ec"/>
<rect x="386.5" y="51" width="413.5" height="311.5" fill="#f0f0f0"/>
<line x1="386.5" y1="51.5" x2="800" y2="51.5" stroke="#a9c3e0" stroke-width="1"/>
<line x1="387" y1="51" x2="387" y2="362.5" stroke="#b4cce6" stroke-width="1"/>
<line x1="386.5" y1="362" x2="800" y2="362" stroke="#a0bcdc" stroke-width="1"/>
<rect x="387.5" y="52" width="412.5" height="14.5" fill="#ffffff"/>
<path d="M391 58.5 L396 55.5 L399 60.5 L394 63.8Z" fill="#b8b8bc"/>
<path d="M391 58.5 L396 55.5 L397.6 58.2 L392.6 61.2Z" fill="#a82838"/>
<path d="M395.5 60 L397.5 61.5 L396 62.5Z" fill="#f4f4f4"/>
<text x="401.25" y="62" font-size="7" fill="#1a1a1a" font-family="Liberation Sans" textLength="32.50" lengthAdjust="spacingAndGlyphs" xml:space="preserve">Calcolatrice</text>
<path d="M789.2 56.5 L794.8 61.8 M794.8 56.5 L789.2 61.8" fill="none" stroke="#333" stroke-width="0.8"/>
<rect x="394.2" y="75" width="21.9" height="7.6" fill="#f0f0f0" stroke="#d9d9d9" stroke-width="0.6"/>
<rect x="443.1" y="75" width="29.3" height="7.6" fill="#f0f0f0" stroke="#d9d9d9" stroke-width="0.6"/>
<rect x="393.7" y="82.5" width="117.8" height="254.2" fill="#ffffff" stroke="#d9d9d9" stroke-width="0.6"/>
<rect x="416.1" y="73" width="27" height="10.5" fill="#ffffff" stroke="#d9d9d9" stroke-width="0.6"/>
<rect x="416.5" y="82" width="26.2" height="1.5" fill="#ffffff"/>
<text x="396.1" y="80.3" font-size="6.9" fill="#222" font-family="Liberation Sans" textLength="18.90" lengthAdjust="spacingAndGlyphs" xml:space="preserve">Verifica</text>
<text x="420" y="79.7" font-size="6.9" fill="#222" font-family="Liberation Sans" textLength="20.00" lengthAdjust="spacingAndGlyphs" xml:space="preserve">Sezione</text>
<text x="445.9" y="80.5" font-size="6.9" fill="#222" font-family="Liberation Sans" textLength="24.80" lengthAdjust="spacingAndGlyphs" xml:space="preserve">Relazione</text>
<path d="M401.5 87.7 L399 87.7 L399 184.4 L505.7 184.4 L505.7 87.7 L423 87.7" fill="none" stroke="#dcdcdc" stroke-width="0.7"/>
<text x="402" y="89" font-size="6.8" fill="#333" font-family="Liberation Sans" textLength="19.70" lengthAdjust="spacingAndGlyphs" xml:space="preserve">Sezione</text>
<rect x="402.9" y="93.4" width="83.1" height="10" fill="#e5e5e5" stroke="#cfcfcf" stroke-width="0.6"/>
<text x="404.2" y="100.6" font-size="6.6" fill="#222" font-family="Liberation Sans" textLength="27.80" lengthAdjust="spacingAndGlyphs" xml:space="preserve">Sezione a I</text>
<path d="M480.5 97.5 L482.5 99.5 L484.5 97.5" fill="none" stroke="#444" stroke-width="0.6"/>
<rect x="487.5" y="95" width="13" height="8.5" fill="#e1e1e1" stroke="#c8c8c8" stroke-width="0.6"/>
<text x="491" y="101" font-size="5" fill="#777" font-family="Liberation Sans" textLength="6.00" lengthAdjust="spacingAndGlyphs" xml:space="preserve">...</text>
<text x="400.4" y="116.2" font-size="7" fill="#333" font-family="Liberation Sans" textLength="6.30" lengthAdjust="spacingAndGlyphs" xml:space="preserve">B1</text>
<rect x="408.6" y="108.5" width="37.69999999999999" height="9.599999999999994" fill="#fff" stroke="#a8a8a8" stroke-width="0.6"/>
<text x="409.6" y="115.4" font-size="6.3" fill="#222" font-family="Liberation Sans" textLength="23.40" lengthAdjust="spacingAndGlyphs" xml:space="preserve">260.0 mm</text>
<text x="400.4" y="127.7" font-size="7" fill="#333" font-family="Liberation Sans" textLength="5.60" lengthAdjust="spacingAndGlyphs" xml:space="preserve">T1</text>
<rect x="408.6" y="120.2" width="37.69999999999999" height="8.999999999999986" fill="#fff" stroke="#a8a8a8" stroke-width="0.6"/>
<text x="409.6" y="127.1" font-size="6.3" fill="#222" font-family="Liberation Sans" textLength="20.20" lengthAdjust="spacingAndGlyphs" xml:space="preserve">12.5 mm</text>
<text x="400.4" y="139.4" font-size="7" fill="#333" font-family="Liberation Sans" textLength="6.60" lengthAdjust="spacingAndGlyphs" xml:space="preserve">B2</text>
<rect x="408.6" y="132" width="37.69999999999999" height="9.300000000000011" fill="#fff" stroke="#a8a8a8" stroke-width="0.6"/>
<text x="409.6" y="138.6" font-size="6.3" fill="#222" font-family="Liberation Sans" textLength="23.40" lengthAdjust="spacingAndGlyphs" xml:space="preserve">260.0 mm</text>
<text x="451.1" y="116.2" font-size="7" fill="#333" font-family="Liberation Sans" textLength="3.90" lengthAdjust="spacingAndGlyphs" xml:space="preserve">D</text>
<rect x="462.2" y="108.5" width="37.19999999999999" height="9.599999999999994" fill="#fff" stroke="#a8a8a8" stroke-width="0.6"/>
<text x="463.2" y="115.4" font-size="6.3" fill="#222" font-family="Liberation Sans" textLength="23.40" lengthAdjust="spacingAndGlyphs" xml:space="preserve">250.0 mm</text>
<text x="452.1" y="127.7" font-size="7" fill="#333" font-family="Liberation Sans" textLength="5.70" lengthAdjust="spacingAndGlyphs" xml:space="preserve">T2</text>
<rect x="462.2" y="120.2" width="37.19999999999999" height="8.999999999999986" fill="#fff" stroke="#a8a8a8" stroke-width="0.6"/>
<text x="463.2" y="127.1" font-size="6.3" fill="#222" font-family="Liberation Sans" textLength="20.30" lengthAdjust="spacingAndGlyphs" xml:space="preserve">12.5 mm</text>
<text x="452.1" y="139.4" font-size="7" fill="#333" font-family="Liberation Sans" textLength="5.90" lengthAdjust="spacingAndGlyphs" xml:space="preserve">T3</text>
<rect x="462.2" y="132" width="37.19999999999999" height="9.300000000000011" fill="#fff" stroke="#a8a8a8" stroke-width="0.6"/>
<text x="463.2" y="138.6" font-size="6.3" fill="#222" font-family="Liberation Sans" textLength="17.60" lengthAdjust="spacingAndGlyphs" xml:space="preserve">7.5 mm</text>
<rect x="403.2" y="144.8" width="47.60000000000002" height="10.5" fill="#e1e1e1" stroke="#adadad" stroke-width="0.6"/>
<text x="407" y="151.9" font-size="6.3" fill="#222" font-family="Liberation Sans" textLength="40.30" lengthAdjust="spacingAndGlyphs" xml:space="preserve">Accoppiamento</text>
<rect x="452.3" y="144.8" width="48.099999999999966" height="10.5" fill="#e1e1e1" stroke="#adadad" stroke-width="0.6"/>
<text x="457.3" y="151.9" font-size="6.3" fill="#222" font-family="Liberation Sans" textLength="37.90" lengthAdjust="spacingAndGlyphs" xml:space="preserve">Aste composte</text>
<rect x="403.2" y="157.2" width="47.60000000000002" height="10.600000000000023" fill="#e1e1e1" stroke="#adadad" stroke-width="0.6"/>
<text x="410" y="164.5" font-size="6.3" fill="#222" font-family="Liberation Sans" textLength="34.00" lengthAdjust="spacingAndGlyphs" xml:space="preserve">Sezioni forate</text>
<rect x="452.3" y="157.2" width="48.099999999999966" height="10.600000000000023" fill="#e1e1e1" stroke="#adadad" stroke-width="0.6"/>
<text x="464.5" y="164.5" font-size="6.3" fill="#222" font-family="Liberation Sans" textLength="23.40" lengthAdjust="spacingAndGlyphs" xml:space="preserve">Raccordi</text>
<rect x="403.2" y="169.7" width="47.60000000000002" height="10.900000000000006" fill="#e1e1e1" stroke="#adadad" stroke-width="0.6"/>
<text x="410.9" y="177.4" font-size="6.3" fill="#222" font-family="Liberation Sans" textLength="32.60" lengthAdjust="spacingAndGlyphs" xml:space="preserve">Inerzie asta...</text>
<rect x="452.3" y="169.7" width="48.099999999999966" height="10.900000000000006" fill="#e1e1e1" stroke="#adadad" stroke-width="0.6"/>
<text x="455.9" y="177.4" font-size="6.3" fill="#222" font-family="Liberation Sans" textLength="40.30" lengthAdjust="spacingAndGlyphs" xml:space="preserve">Parametri asta...</text>
<path d="M401.5 188.9 L399 188.9 L399 265.1 L505.7 265.1 L505.7 188.9 L427 188.9" fill="none" stroke="#dcdcdc" stroke-width="0.7"/>
<text x="401.7" y="191" font-size="6.8" fill="#333" font-family="Liberation Sans" textLength="24.10" lengthAdjust="spacingAndGlyphs" xml:space="preserve">Parametri</text>
<text x="406.7" y="201.7" font-size="6.8" fill="#333" font-family="Liberation Sans" textLength="7.70" lengthAdjust="spacingAndGlyphs" xml:space="preserve">AF</text>
<rect x="438.7" y="195.6" width="47.900000000000034" height="9.200000000000017" fill="#fff" stroke="#a8a8a8" stroke-width="0.6"/>
<text x="439.7" y="202.2" font-size="6.3" fill="#222" font-family="Liberation Sans" textLength="14.90" lengthAdjust="spacingAndGlyphs" xml:space="preserve">0.00 N</text>
<text x="406.7" y="213" font-size="6.8" fill="#333" font-family="Liberation Sans" textLength="7.70" lengthAdjust="spacingAndGlyphs" xml:space="preserve">M1</text>
<rect x="438.7" y="206.1" width="47.900000000000034" height="9.200000000000017" fill="#fff" stroke="#a8a8a8" stroke-width="0.6"/>
<text x="439.7" y="212.6" font-size="6.3" fill="#222" font-family="Liberation Sans" textLength="37.30" lengthAdjust="spacingAndGlyphs" xml:space="preserve">-1.40e-08 Nmm</text>
<text x="406.7" y="224" font-size="6.8" fill="#333" font-family="Liberation Sans" textLength="7.70" lengthAdjust="spacingAndGlyphs" xml:space="preserve">M2</text>
<rect x="438.7" y="217.2" width="47.900000000000034" height="9.200000000000017" fill="#fff" stroke="#a8a8a8" stroke-width="0.6"/>
<text x="439.7" y="223.6" font-size="6.3" fill="#222" font-family="Liberation Sans" textLength="36.30" lengthAdjust="spacingAndGlyphs" xml:space="preserve">5.67e+07 Nmm</text>
<text x="406.7" y="234.9" font-size="6.8" fill="#333" font-family="Liberation Sans" textLength="7.70" lengthAdjust="spacingAndGlyphs" xml:space="preserve">V1</text>
<rect x="438.7" y="228.2" width="47.900000000000034" height="9.200000000000017" fill="#fff" stroke="#4a90d9" stroke-width="0.6"/>
<text x="439.7" y="234.5" font-size="6.3" fill="#222" font-family="Liberation Sans" textLength="2.30" lengthAdjust="spacingAndGlyphs" xml:space="preserve">0</text>
<text x="406.7" y="246" font-size="6.8" fill="#333" font-family="Liberation Sans" textLength="7.70" lengthAdjust="spacingAndGlyphs" xml:space="preserve">V2</text>
<rect x="438.7" y="238.9" width="47.900000000000034" height="9.299999999999983" fill="#fff" stroke="#a8a8a8" stroke-width="0.6"/>
<text x="439.7" y="245.6" font-size="6.3" fill="#222" font-family="Liberation Sans" textLength="28.70" lengthAdjust="spacingAndGlyphs" xml:space="preserve">-70331.20 N</text>
<text x="406.7" y="256.9" font-size="6.8" fill="#333" font-family="Liberation Sans" textLength="7.70" lengthAdjust="spacingAndGlyphs" xml:space="preserve">MT</text>
<rect x="438.7" y="249.8" width="47.900000000000034" height="9.399999999999977" fill="#fff" stroke="#a8a8a8" stroke-width="0.6"/>
<text x="439.7" y="256.5" font-size="6.3" fill="#222" font-family="Liberation Sans" textLength="32.10" lengthAdjust="spacingAndGlyphs" xml:space="preserve">-396.31 Nmm</text>
<line x1="443" y1="229.5" x2="443" y2="236" stroke="#000" stroke-width="0.5"/>
<rect x="393" y="344.3" width="32" height="10.399999999999977" fill="#cccccc" stroke="#cccccc" stroke-width="0.6"/>
<text x="402.1" y="351.7" font-size="6.3" fill="#a0a0a0" font-family="Liberation Sans" textLength="13.80" lengthAdjust="spacingAndGlyphs" xml:space="preserve">Apri...</text>
<rect x="426.5" y="344.8" width="31.100000000000023" height="9.399999999999977" fill="#e1e1e1" stroke="#2a78c8" stroke-width="1"/>
<text x="432.6" y="351.7" font-size="6.3" fill="#222" font-family="Liberation Sans" textLength="18.60" lengthAdjust="spacingAndGlyphs" xml:space="preserve">Salva...</text>
<rect x="754.3" y="344.8" width="40.200000000000045" height="9.399999999999977" fill="#e1e1e1" stroke="#2a78c8" stroke-width="1"/>
<text x="766" y="351.7" font-size="6.3" fill="#222" font-family="Liberation Sans" textLength="16.20" lengthAdjust="spacingAndGlyphs" xml:space="preserve">Chiudi</text>
<path d="M792 362 L800 354 L800 362Z" fill="#c8c8cc"/>
<rect x="517.5" y="73.4" width="277" height="263.3" fill="#000"/>
<rect x="519.5" y="75.5" width="274.2" height="6.2" fill="none" stroke="#a8a8a8" stroke-width="0.8"/>
<rect x="519.5" y="82.9" width="274.2" height="18.4" fill="none" stroke="#a8a8a8" stroke-width="0.8"/>
<line x1="538" y1="82.9" x2="538" y2="101.3" stroke="#a8a8a8" stroke-width="0.8"/>
<rect x="519.5" y="102.7" width="274.2" height="31.5" fill="none" stroke="#a8a8a8" stroke-width="0.8"/>
<line x1="519.5" y1="114.9" x2="793.7" y2="114.9" stroke="#a8a8a8" stroke-width="0.8"/>
<text x="583.8" y="80.2" font-size="4.9" fill="#c4c4c4" font-family="Liberation Mono" textLength="143.57" lengthAdjust="spacingAndGlyphs" xml:space="preserve">Grp.: 1° piano  Trave: 13  Prop.: 5  Sez.in: 0.00</text>
<text x="521.2" y="93.6" font-size="4.9" fill="#c4c4c4" font-family="Liberation Mono" textLength="14.65" lengthAdjust="spacingAndGlyphs" xml:space="preserve">Cmb 1</text>
<text x="580.9" y="87.7" font-size="4.9" fill="#c4c4c4" font-family="Liberation Mono" textLength="41.02" lengthAdjust="spacingAndGlyphs" xml:space="preserve">M1 = -1.40e-08</text>
<text x="590" y="93.8" font-size="4.9" fill="#c4c4c4" font-family="Liberation Mono" textLength="23.44" lengthAdjust="spacingAndGlyphs" xml:space="preserve">N = 0.00</text>
<text x="581.3" y="100.1" font-size="4.9" fill="#c4c4c4" font-family="Liberation Mono" textLength="41.02" lengthAdjust="spacingAndGlyphs" xml:space="preserve">V2 = -70331.20</text>
<text x="709.8" y="87.7" font-size="4.9" fill="#c4c4c4" font-family="Liberation Mono" textLength="38.09" lengthAdjust="spacingAndGlyphs" xml:space="preserve">M2 = 5.67e+07</text>
<text x="715.7" y="93.8" font-size="4.9" fill="#c4c4c4" font-family="Liberation Mono" textLength="26.37" lengthAdjust="spacingAndGlyphs" xml:space="preserve">V1 = 0.00</text>
<text x="710.9" y="100.1" font-size="4.9" fill="#c4c4c4" font-family="Liberation Mono" textLength="35.16" lengthAdjust="spacingAndGlyphs" xml:space="preserve">MT = -396.31</text>
<text x="639.9" y="107.8" font-size="4.9" fill="#c4c4c4" font-family="Liberation Mono" textLength="32.23" lengthAdjust="spacingAndGlyphs" xml:space="preserve">Sezione a I</text>
<text x="560.8" y="113.6" font-size="4.9" fill="#c4c4c4" font-family="Liberation Mono" textLength="190.45" lengthAdjust="spacingAndGlyphs" xml:space="preserve">D = 250.0  B1 = 260.0  T1 = 12.5  T2 = 12.5  T3 = 7.5  B2 = 260.0</text>
<text x="583.2" y="120.1" font-size="4.9" fill="#c4c4c4" font-family="Liberation Mono" textLength="11.72" lengthAdjust="spacingAndGlyphs" xml:space="preserve">Area</text>
<text x="658.6" y="120.1" font-size="4.9" fill="#c4c4c4" font-family="Liberation Mono" textLength="29.30" lengthAdjust="spacingAndGlyphs" xml:space="preserve">= 8.48e+03</text>
<text x="584.7" y="126.2" font-size="4.9" fill="#c4c4c4" font-family="Liberation Mono" textLength="8.79" lengthAdjust="spacingAndGlyphs" xml:space="preserve">I11</text>
<text x="658.6" y="126.2" font-size="4.9" fill="#c4c4c4" font-family="Liberation Mono" textLength="29.30" lengthAdjust="spacingAndGlyphs" xml:space="preserve">= 1.05e+08</text>
<text x="584.7" y="132.2" font-size="4.9" fill="#c4c4c4" font-family="Liberation Mono" textLength="8.79" lengthAdjust="spacingAndGlyphs" xml:space="preserve">I22</text>
<text x="658.6" y="132.2" font-size="4.9" fill="#c4c4c4" font-family="Liberation Mono" textLength="29.30" lengthAdjust="spacingAndGlyphs" xml:space="preserve">= 3.67e+07</text>
<text x="702.1" y="139.5" font-size="4.9" fill="#c4c4c4" font-family="Liberation Mono" textLength="67.39" lengthAdjust="spacingAndGlyphs" xml:space="preserve">VERIFICA DI RESISTENZA:</text>
<text x="706.2" y="147.6" font-size="4.9" fill="#c4c4c4" font-family="Liberation Mono" textLength="17.58" lengthAdjust="spacingAndGlyphs" xml:space="preserve">Classe</text>
<text x="731.2" y="147.6" font-size="4.9" fill="#c4c4c4" font-family="Liberation Mono" textLength="29.30" lengthAdjust="spacingAndGlyphs" xml:space="preserve">= Classe 1</text>
<text x="709.6" y="153.9" font-size="4.9" fill="#c4c4c4" font-family="Liberation Mono" textLength="14.65" lengthAdjust="spacingAndGlyphs" xml:space="preserve">Fa-sr</text>
<text x="731.2" y="153.9" font-size="4.9" fill="#c4c4c4" font-family="Liberation Mono" textLength="17.58" lengthAdjust="spacingAndGlyphs" xml:space="preserve">= 0.29</text>
<text x="710.2" y="160.4" font-size="4.9" fill="#c4c4c4" font-family="Liberation Mono" textLength="11.72" lengthAdjust="spacingAndGlyphs" xml:space="preserve">Fa-v</text>
<text x="731.2" y="160.4" font-size="4.9" fill="#c4c4c4" font-family="Liberation Mono" textLength="17.58" lengthAdjust="spacingAndGlyphs" xml:space="preserve">= 0.19</text>
<text x="710.2" y="167.1" font-size="4.9" fill="#c4c4c4" font-family="Liberation Mono" textLength="11.72" lengthAdjust="spacingAndGlyphs" xml:space="preserve">Fa-r</text>
<text x="731.2" y="167.1" font-size="4.9" fill="#c4c4c4" font-family="Liberation Mono" textLength="17.58" lengthAdjust="spacingAndGlyphs" xml:space="preserve">= 0.00</text>
<text x="710.2" y="173.7" font-size="4.9" fill="#c4c4c4" font-family="Liberation Mono" textLength="11.72" lengthAdjust="spacingAndGlyphs" xml:space="preserve">Fa-t</text>
<text x="731.2" y="173.7" font-size="4.9" fill="#c4c4c4" font-family="Liberation Mono" textLength="17.58" lengthAdjust="spacingAndGlyphs" xml:space="preserve">= 0.30</text>
<text x="702.1" y="188.3" font-size="4.9" fill="#c4c4c4" font-family="Liberation Mono" textLength="67.39" lengthAdjust="spacingAndGlyphs" xml:space="preserve">VERIFICA DI STABILITA':</text>
<text x="706.2" y="194.4" font-size="4.9" fill="#c4c4c4" font-family="Liberation Mono" textLength="17.58" lengthAdjust="spacingAndGlyphs" xml:space="preserve">Classe</text>
<text x="731.2" y="194.4" font-size="4.9" fill="#c4c4c4" font-family="Liberation Mono" textLength="29.30" lengthAdjust="spacingAndGlyphs" xml:space="preserve">= Classe 1</text>
<text x="710.2" y="201.5" font-size="4.9" fill="#c4c4c4" font-family="Liberation Mono" textLength="11.72" lengthAdjust="spacingAndGlyphs" xml:space="preserve">Fr-n</text>
<text x="731.2" y="201.5" font-size="4.9" fill="#c4c4c4" font-family="Liberation Mono" textLength="17.58" lengthAdjust="spacingAndGlyphs" xml:space="preserve">= 0.00</text>
<text x="709.2" y="208.2" font-size="4.9" fill="#c4c4c4" font-family="Liberation Mono" textLength="14.65" lengthAdjust="spacingAndGlyphs" xml:space="preserve">Fsr,y</text>
<text x="731.2" y="208.2" font-size="4.9" fill="#c4c4c4" font-family="Liberation Mono" textLength="17.58" lengthAdjust="spacingAndGlyphs" xml:space="preserve">= 0.12</text>
<text x="709.2" y="215.3" font-size="4.9" fill="#c4c4c4" font-family="Liberation Mono" textLength="14.65" lengthAdjust="spacingAndGlyphs" xml:space="preserve">Fsr,z</text>
<text x="731.2" y="215.3" font-size="4.9" fill="#c4c4c4" font-family="Liberation Mono" textLength="17.58" lengthAdjust="spacingAndGlyphs" xml:space="preserve">= 0.29</text>
<line x1="542.2" y1="165.4" x2="675.5" y2="165.4" stroke="#b0b0b0" stroke-width="0.7"/>
<line x1="542.2" y1="164" x2="542.2" y2="166.5" stroke="#d8d8d8" stroke-width="0.6"/>
<line x1="607.8" y1="164" x2="607.8" y2="166.5" stroke="#d8d8d8" stroke-width="0.6"/>
<line x1="610.9" y1="164" x2="610.9" y2="166.5" stroke="#d8d8d8" stroke-width="0.6"/>
<line x1="675.5" y1="164" x2="675.5" y2="166.5" stroke="#d8d8d8" stroke-width="0.6"/>
<text x="570.9" y="164.4" font-size="5.2" fill="#d8d8d8" font-family="Liberation Sans" textLength="8.20" lengthAdjust="spacingAndGlyphs" xml:space="preserve">126</text>
<text x="608" y="164.4" font-size="5.2" fill="#d8d8d8" font-family="Liberation Sans" textLength="3.00" lengthAdjust="spacingAndGlyphs" xml:space="preserve">8</text>
<text x="638.9" y="164.4" font-size="5.2" fill="#d8d8d8" font-family="Liberation Sans" textLength="8.20" lengthAdjust="spacingAndGlyphs" xml:space="preserve">126</text>
<path d="M542.2 172.7 L675.5 172.7 L675.5 179.4 L610.9 179.4 L610.9 294.2 L675.5 294.2 L675.5 300.5 L542.2 300.5 L542.2 294.2 L607.8 294.2 L607.8 179.4 L542.2 179.4 Z" fill="none" stroke="#d8d8d8" stroke-width="0.8"/>
<line x1="542.2" y1="307.4" x2="675.7" y2="307.4" stroke="#d8d8d8" stroke-width="0.7"/>
<text x="604.5" y="306.3" font-size="5.2" fill="#d8d8d8" font-family="Liberation Sans" textLength="8.20" lengthAdjust="spacingAndGlyphs" xml:space="preserve">260</text>
<line x1="536" y1="172.7" x2="536" y2="300.5" stroke="#d8d8d8" stroke-width="0.7"/>
<line x1="682.8" y1="172.7" x2="682.8" y2="294.2" stroke="#d8d8d8" stroke-width="0.7"/>
<line x1="682.8" y1="294.2" x2="682.8" y2="300.5" stroke="#d8d8d8" stroke-width="0.7"/>
<text transform="translate(537.6,233.3) rotate(90)" x="0" y="0" font-size="5.2" fill="#d8d8d8" font-family="Liberation Sans" textLength="8.20" lengthAdjust="spacingAndGlyphs">250</text>
<text transform="translate(685.4,233.3) rotate(90)" x="0" y="0" font-size="5.2" fill="#d8d8d8" font-family="Liberation Sans" textLength="8.20" lengthAdjust="spacingAndGlyphs">225</text>
<text transform="translate(685.4,172.4) rotate(90)" x="0" y="0" font-size="5.2" fill="#d8d8d8" font-family="Liberation Sans" textLength="6.10" lengthAdjust="spacingAndGlyphs">13</text>
<text transform="translate(685.4,293.5) rotate(90)" x="0" y="0" font-size="5.2" fill="#d8d8d8" font-family="Liberation Sans" textLength="5.30" lengthAdjust="spacingAndGlyphs">13</text>
<line x1="576" y1="236.3" x2="608.6" y2="236.3" stroke="#1f8a1f" stroke-width="0.7"/>
<line x1="608.6" y1="236.3" x2="608.6" y2="276.3" stroke="#1f8a1f" stroke-width="0.7"/>
<text x="569.5" y="238.3" font-size="4.5" fill="#1f8a1f" font-family="Liberation Mono" textLength="6.50" lengthAdjust="spacingAndGlyphs" xml:space="preserve">Cy</text>
<text x="607" y="279.3" font-size="4.5" fill="#1f8a1f" font-family="Liberation Mono" textLength="6.00" lengthAdjust="spacingAndGlyphs" xml:space="preserve">Cz</text>
</svg>
</body></html>
